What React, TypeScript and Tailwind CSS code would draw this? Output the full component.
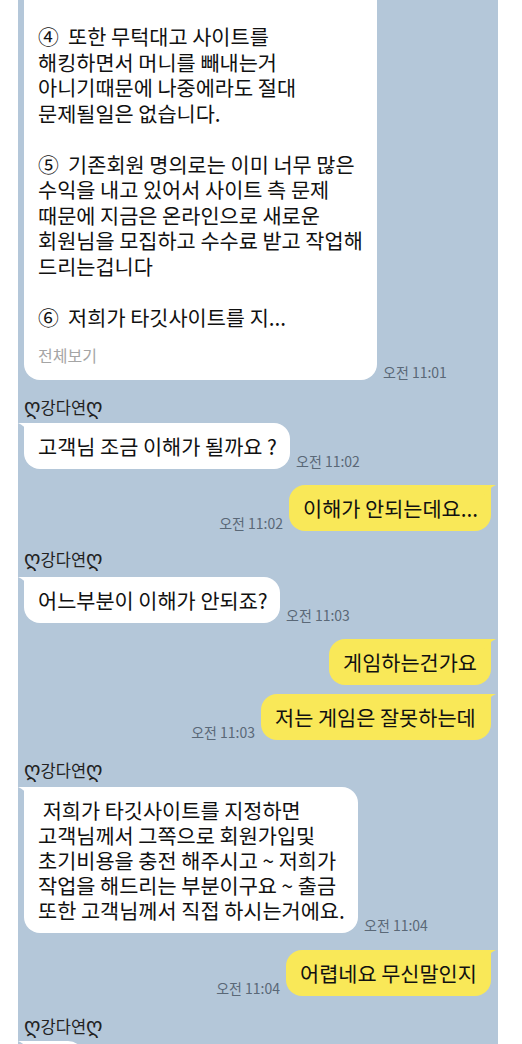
import React from "react";

function TailLeft() {
  return (
    <svg className="absolute left-[-6px] top-0" width="12" height="10" viewBox="0 0 12 10">
      <path d="M0 0 H12 V10 C8 5 4 1.5 0 0 Z" fill="#ffffff" />
    </svg>
  );
}

function TailRight() {
  return (
    <svg className="absolute right-[-5px] top-0" width="12" height="10" viewBox="0 0 12 10">
      <path d="M12 0 H0 V10 C4 5 8 1.5 12 0 Z" fill="#f9e858" />
    </svg>
  );
}

function Time({ t }: { t: string }) {
  return (
    <span className="text-[14px] leading-[16px] text-[#5a6877] whitespace-nowrap">{t}</span>
  );
}

function Name() {
  return (
    <div className="h-[20px] leading-[20px] text-[16.5px] text-[#222] flex items-center">
      <span className="text-[21px] leading-[20px] font-['DejaVu_Sans',sans-serif]">ღ</span>
      <span>강다연</span>
      <span className="text-[21px] leading-[20px] font-['DejaVu_Sans',sans-serif]">ღ</span>
    </div>
  );
}

function LeftMsg({ lines, w, t, mt }: { lines: string[]; w: string; t?: string; mt: string }) {
  return (
    <div className={`flex items-end gap-[6px] ${mt}`}>
      <div className={`relative bg-white rounded-[16px] rounded-tl-[3px] px-[14px] py-[10.5px] ${w}`}>
        <TailLeft />
        {lines.map((l, i) => (
          <div key={i} className="text-[20.8px] leading-[25px] text-[#111] whitespace-pre">
            {l}
          </div>
        ))}
      </div>
      {t && <Time t={t} />}
    </div>
  );
}

function RightMsg({ text, w, t, mt }: { text: string; w: string; t?: string; mt: string }) {
  return (
    <div className={`flex items-end justify-end gap-[6px] ${mt}`}>
      {t && <Time t={t} />}
      <div className={`relative bg-[#f9e858] rounded-[16px] rounded-tr-[3px] pl-[14px] pr-[14px] py-[10.5px] ${w}`}>
        <TailRight />
        <div className="text-[20.8px] leading-[25px] text-[#111] whitespace-pre">{text}</div>
      </div>
    </div>
  );
}

export default function App() {
  return (
    <div className="w-[522px] h-[1044px] bg-white overflow-hidden font-['Noto_Sans_CJK_KR','DejaVu_Sans',sans-serif]">
      <div className="ml-[18px] w-[480px] h-full bg-[#b4c7d9] pl-[6px] pr-[7px] flex flex-col">
        {/* Long message */}
        <div className="flex items-end gap-[6px] mt-[-20px]">
          <div className="relative bg-white rounded-[16px] w-[353px] pl-[14px] pr-[10px] pt-[44.25px] pb-[15px]">
            <div className="text-[20.8px] leading-[25.5px] text-[#111] whitespace-pre">
              <div>④  또한 무턱대고 사이트를</div>
              <div>해킹하면서 머니를 빼내는거</div>
              <div>아니기때문에 나중에라도 절대</div>
              <div>문제될일은 없습니다.</div>
              <div className="h-[25.5px]"></div>
              <div>⑤  기존회원 명의로는 이미 너무 많은</div>
              <div>수익을 내고 있어서 사이트 측 문제</div>
              <div>때문에 지금은 온라인으로 새로운</div>
              <div>회원님을 모집하고 수수료 받고 작업해</div>
              <div>드리는겁니다</div>
              <div className="h-[25.5px]"></div>
              <div>⑥  저희가 타깃사이트를 지...</div>
            </div>
            <div className="mt-[14.75px] text-[16px] leading-[20px] text-[#a5a5a5]">전체보기</div>
          </div>
          <Time t="오전 11:01" />
        </div>

        <div className="mt-[17px]"><Name /></div>
        <LeftMsg mt="mt-[6px]" w="w-[266px]" lines={["고객님 조금 이해가 될까요 ?"]} t="오전 11:02" />
        <RightMsg mt="mt-[16px]" w="w-[202px]" text="이해가 안되는데요..." t="오전 11:02" />

        <div className="mt-[18px]"><Name /></div>
        <LeftMsg mt="mt-[8px]" w="w-[256px]" lines={["어느부분이 이해가 안되죠?"]} t="오전 11:03" />
        <RightMsg mt="mt-[16px]" w="w-[162px]" text="게임하는건가요" />
        <RightMsg mt="mt-[9px]" w="w-[230px]" text="저는 게임은 잘못하는데" t="오전 11:03" />

        <div className="mt-[20px]"><Name /></div>
        <LeftMsg
          mt="mt-[7px]"
          w="w-[334px]"
          lines={[
            " 저희가 타깃사이트를 지정하면",
            "고객님께서 그쪽으로 회원가입및",
            "초기비용을 충전 해주시고 ~ 저희가",
            "작업을 해드리는 부분이구요 ~ 출금",
            "또한 고객님께서 직접 하시는거에요.",
          ]}
          t="오전 11:04"
        />
        <RightMsg mt="mt-[17px]" w="w-[205px]" text="어렵네요 무신말인지" t="오전 11:04" />

        <div className="mt-[20px]"><Name /></div>
        <div className="mt-[5px] flex">
          <div className="relative bg-white rounded-[16px] rounded-tl-[3px] w-[60px] h-[46px]">
            <TailLeft />
          </div>
        </div>
      </div>
    </div>
  );
}
